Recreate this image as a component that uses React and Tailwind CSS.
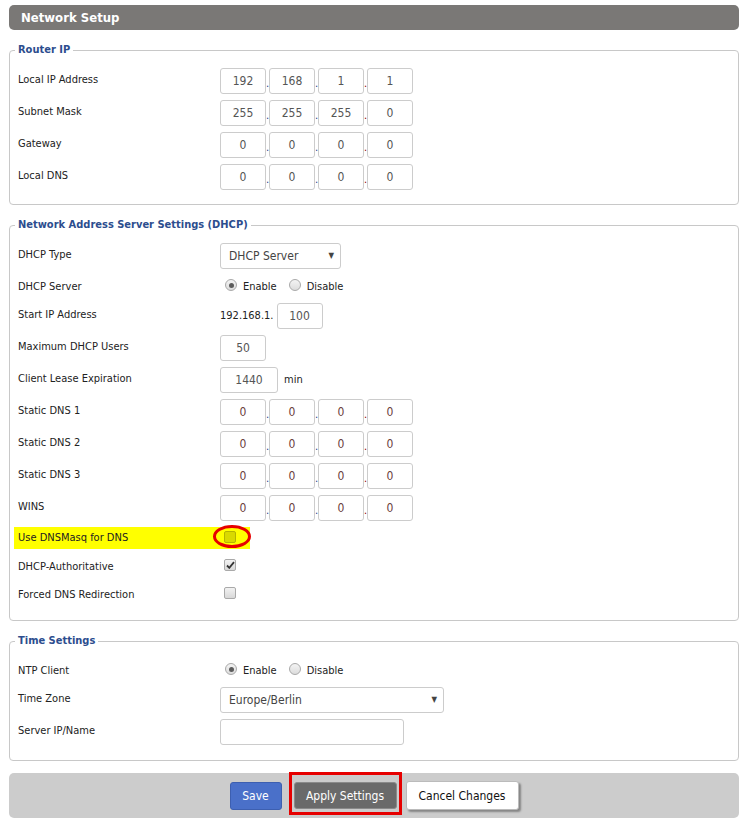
import React from 'react';

const font = { fontFamily: "'DejaVu Sans Condensed', 'Liberation Sans', sans-serif" };

function Box({ value, w = 'w-[46px]', tone = 'text-[#555]' }) {
    return (
        <div className={`${w} h-[26px] flex items-center justify-center border border-[#ccc] rounded-[3px] bg-white text-[12px] ${tone}`}>
            {value}
        </div>
    );
}

function Dot({ red }) {
    return (
        <span className={`w-[3px] self-end pb-[5px] text-[11px] leading-none text-center ${red ? 'text-[#8b0000]' : 'text-[#1a3d8a]'}`}>.</span>
    );
}

function IpBoxes({ values, tone }) {
    return (
        <div className="flex">
            <Box value={values[0]} tone={tone} />
            <Dot />
            <Box value={values[1]} tone={tone} />
            <Dot />
            <Box value={values[2]} tone={tone} />
            <Dot red />
            <Box value={values[3]} tone={tone} />
        </div>
    );
}

function Row({ label, tall = true, children }) {
    return (
        <div className={`flex items-center ${tall ? 'h-[32px]' : 'h-[28px]'}`}>
            <div className={`w-[202px] text-[11px] text-[#222] ${tall ? '-mt-[2px]' : 'mt-[2px]'}`}>{label}</div>
            <div className="flex items-center">{children}</div>
        </div>
    );
}

function Radio({ checked }) {
    return (
        <span className="w-[12px] h-[12px] rounded-full border border-[#a9a9a9] bg-gradient-to-b from-[#f4f4f4] to-[#dcdcdc] flex items-center justify-center">
            {checked && <span className="w-[5px] h-[5px] rounded-full bg-[#5c5c5c]" />}
        </span>
    );
}

function EnableDisable() {
    return (
        <div className="flex items-center text-[11px] text-[#222] ml-[5px]">
            <span className="-mt-[2px]"><Radio checked /></span>
            <span className="ml-[6px] mt-[3px]">Enable</span>
            <span className="ml-[12px] -mt-[2px]"><Radio /></span>
            <span className="ml-[6px] mt-[3px]">Disable</span>
        </div>
    );
}

function Check({ checked, yellow }) {
    return (
        <span className={`w-[12px] h-[12px] rounded-[2px] border flex items-center justify-center ${yellow ? 'border-[#b5b500] bg-[#d9d900]' : 'border-[#a9a9a9] bg-gradient-to-b from-[#f2f2f2] to-[#d8d8d8]'}`}>
            {checked && (
                <svg width="9" height="8" viewBox="0 0 9 8">
                    <path d="M1 4.5 L3.3 6.8 L8 1.2" fill="none" stroke="#333" strokeWidth="1.8" />
                </svg>
            )}
        </span>
    );
}

function Select({ value, w }) {
    return (
        <div className={`${w} h-[26px] flex items-center justify-between border border-[#ccc] rounded-[3px] bg-white pl-[8px] pr-[6px] text-[12px] text-[#444]`}>
            <span>{value}</span>
            <span className="text-[8px] text-[#444]">▼</span>
        </div>
    );
}

function Section({ title, pb = 'pb-[11px]', children }) {
    return (
        <fieldset className={`border border-[#c8c8c8] rounded-[4px] px-[8px] ${pb} mt-[13px]`}>
            <legend className="px-[3px] -ml-[3px] text-[11px] leading-[14px] font-bold text-[#2c4d8e]">{title}</legend>
            <div className="pt-[8px]">{children}</div>
        </fieldset>
    );
}

export default function App() {
    return (
        <div className="w-[742px] min-h-[823px] bg-white pl-[9px] pr-[3px] pt-[5px]" style={font}>
            <div className="h-[25px] bg-[#7a7876] rounded-[5px] flex items-center pl-[12px]">
                <span className="text-white font-bold text-[13px]">Network Setup</span>
            </div>

            <Section title="Router IP">
                <Row label="Local IP Address"><IpBoxes values={['192', '168', '1', '1']} /></Row>
                <Row label="Subnet Mask"><IpBoxes values={['255', '255', '255', '0']} /></Row>
                <Row label="Gateway"><IpBoxes values={['0', '0', '0', '0']} /></Row>
                <Row label="Local DNS"><IpBoxes values={['0', '0', '0', '0']} /></Row>
            </Section>

            <Section title="Network Address Server Settings (DHCP)" pb="pb-[12px]">
                <Row label="DHCP Type"><Select value="DHCP Server" w="w-[121px]" /></Row>
                <Row label="DHCP Server" tall={false}><EnableDisable /></Row>
                <Row label="Start IP Address">
                    <span className="text-[11px] text-[#222] mr-[3px]">192.168.1.</span>
                    <Box value="100" />
                </Row>
                <Row label="Maximum DHCP Users"><Box value="50" /></Row>
                <Row label="Client Lease Expiration">
                    <Box value="1440" w="w-[58px]" />
                    <span className="text-[11px] text-[#222] ml-[6px]">min</span>
                </Row>
                <Row label="Static DNS 1"><IpBoxes values={['0', '0', '0', '0']} tone="text-[#6b4040]" /></Row>
                <Row label="Static DNS 2"><IpBoxes values={['0', '0', '0', '0']} tone="text-[#6b4040]" /></Row>
                <Row label="Static DNS 3"><IpBoxes values={['0', '0', '0', '0']} tone="text-[#6b4040]" /></Row>
                <Row label="WINS"><IpBoxes values={['0', '0', '0', '0']} tone="text-[#6b4040]" /></Row>
                <div className="h-[28px] flex items-center">
                    <div className="relative -ml-[4px] pl-[4px] w-[236px] h-[22px] bg-[#ffff00] flex items-center">
                        <div className="w-[202px] text-[11px] text-[#222] mt-[1px]">Use DNSMasq for DNS</div>
                        <span className="ml-[4px] -mt-[2px]"><Check yellow /></span>
                        <span className="absolute left-[199px] top-[-2px] w-[38px] h-[23px] rounded-[50%] border-[3px] border-[#e60000]" />
                    </div>
                </div>
                <Row label="DHCP-Authoritative" tall={false}><span className="ml-[4px] -mt-[2px]"><Check checked /></span></Row>
                <Row label="Forced DNS Redirection" tall={false}><span className="ml-[4px] -mt-[2px]"><Check /></span></Row>
            </Section>

            <Section title="Time Settings" pb="pb-[12px]">
                <Row label="NTP Client" tall={false}><EnableDisable /></Row>
                <Row label="Time Zone"><Select value="Europe/Berlin" w="w-[224px]" /></Row>
                <Row label="Server IP/Name">
                    <div className="w-[184px] h-[26px] border border-[#ccc] rounded-[3px] bg-white" />
                </Row>
            </Section>

            <div className="mt-[12px] h-[45px] bg-[#cccccc] rounded-[5px] flex items-center justify-center">
                <button className="w-[52px] h-[28px] rounded-[3px] bg-[#4a70c9] border border-[#3d5fb0] text-white text-[12px]">Save</button>
                <div className="relative ml-[12px]">
                    <button className="w-[103px] h-[27px] rounded-[3px] bg-[#6a6a6a] border border-[#8a8a8a] text-white text-[12px]">Apply Settings</button>
                    <span className="absolute -left-[5px] -right-[5px] -top-[10px] -bottom-[6px] border-[3px] border-[#e60000]" />
                </div>
                <button className="ml-[9px] w-[113px] h-[29px] rounded-[3px] bg-white border border-[#bbb] shadow-[2px_2px_2px_rgba(0,0,0,0.35)] text-[#111] text-[12px]">Cancel Changes</button>
            </div>
        </div>
    );
}
